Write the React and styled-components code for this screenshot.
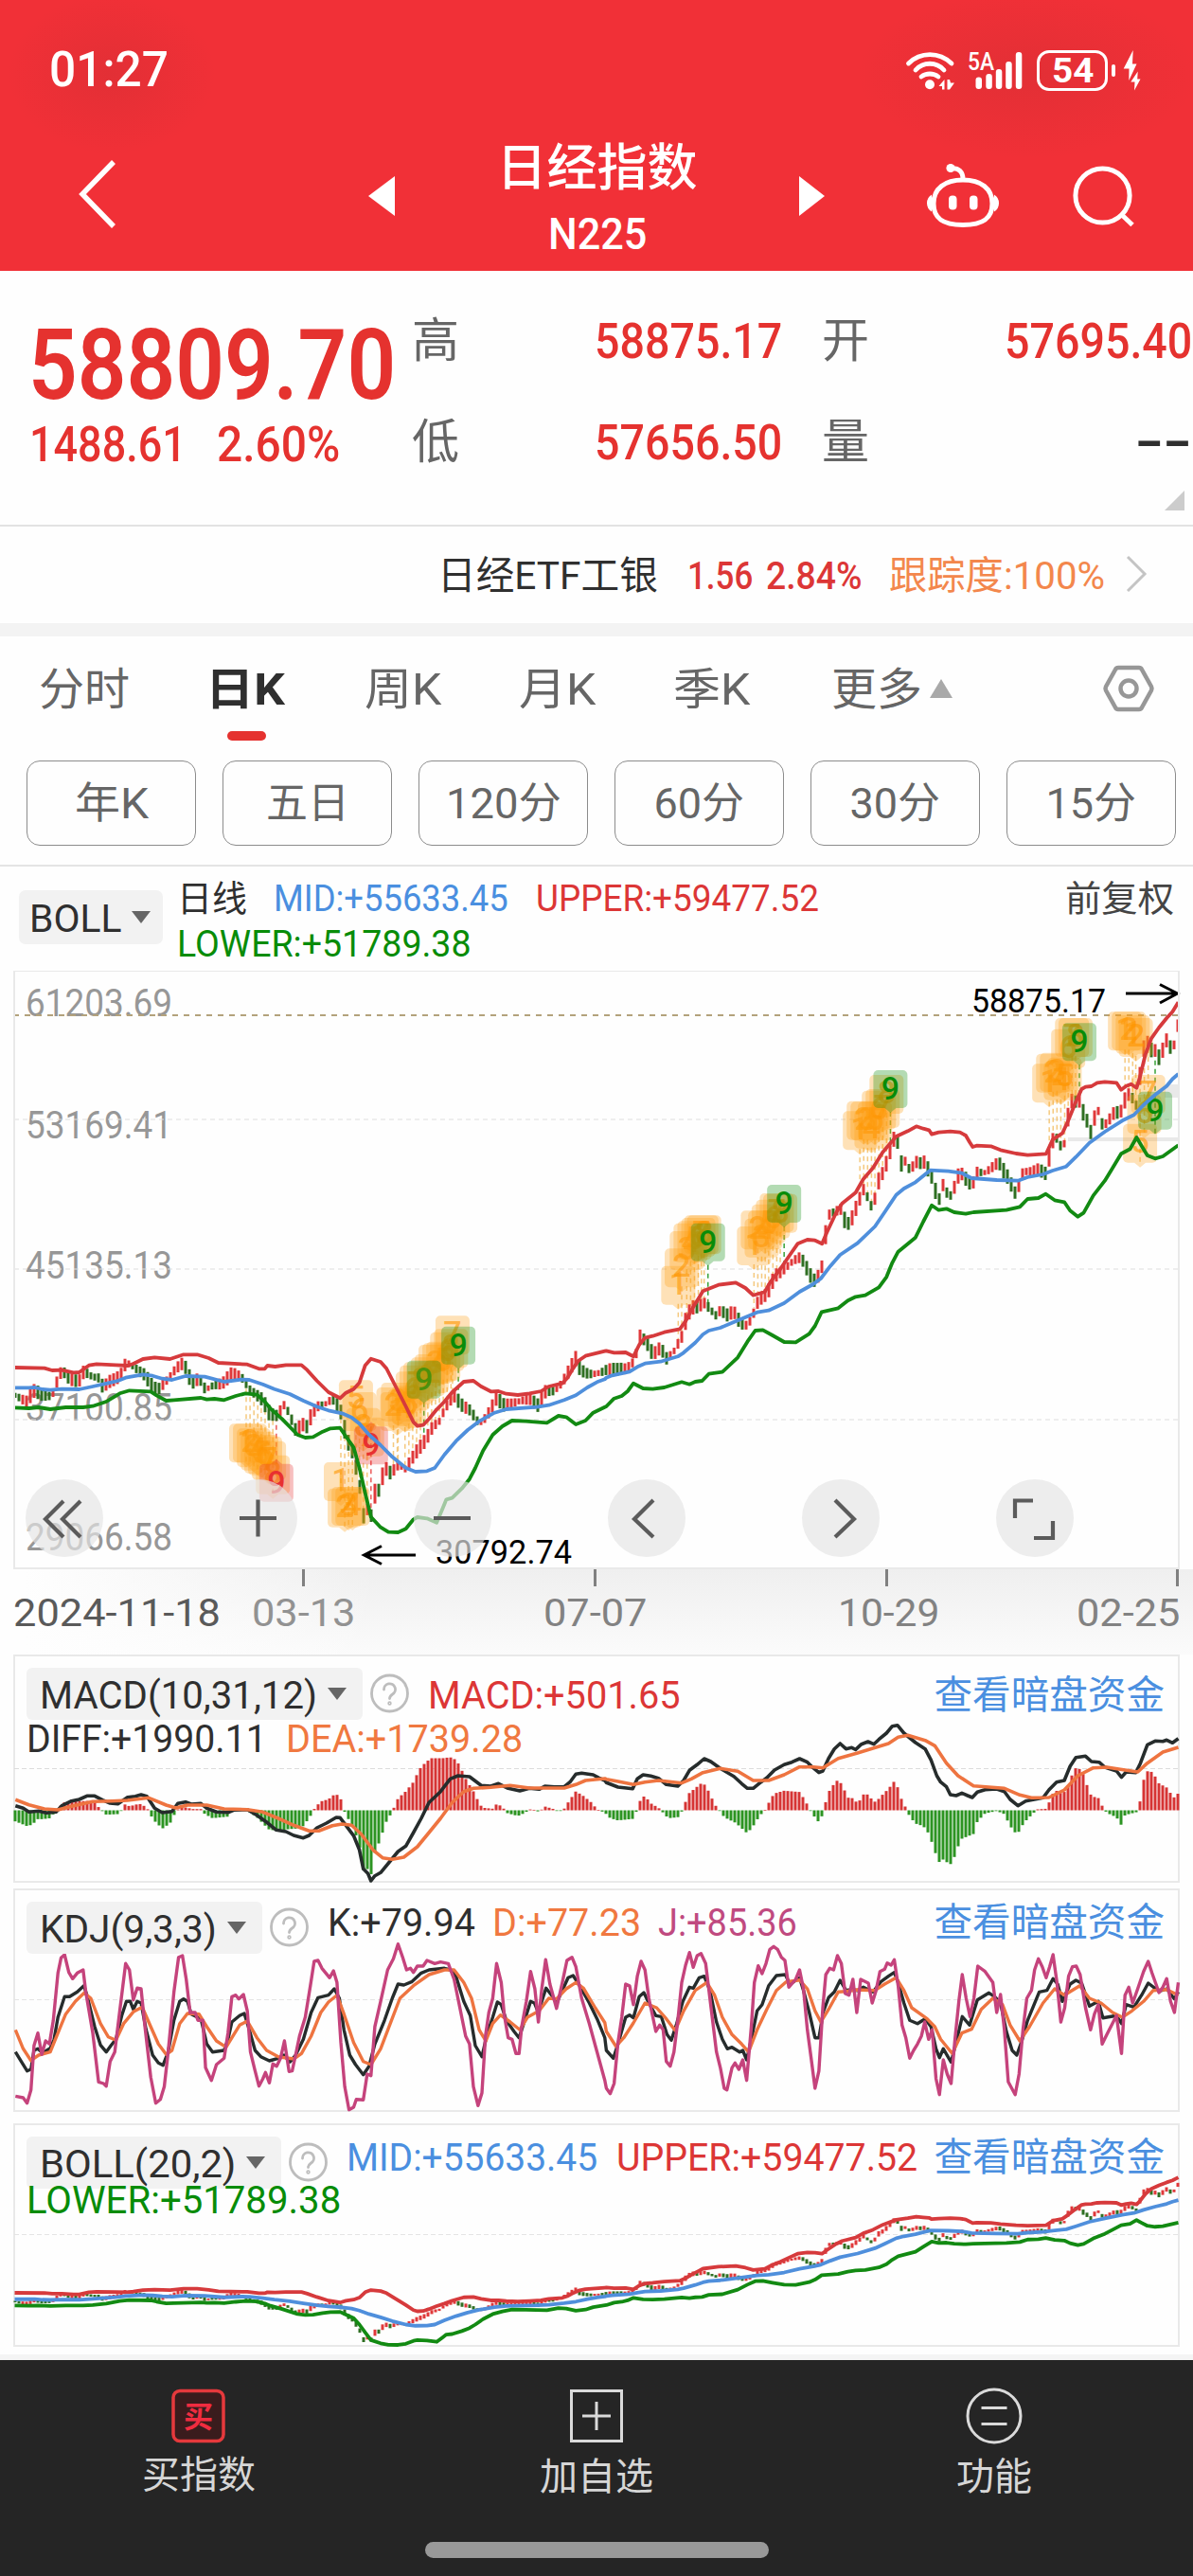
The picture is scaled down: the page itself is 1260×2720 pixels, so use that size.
import { useLayoutEffect, useRef, useState } from 'react';
import styled, { createGlobalStyle } from 'styled-components';

const RED = '#e5322f';
const BLUE = '#4a8fe0';
const GREEN = '#088c08';
const ORANGE = '#f07840';
const INK = '#2f2f2f';

/* ---------- chart data ---------- */

// Series are digitised per half of the time axis: "x,y x,y ..." in data units.
const SX = 2.45;
const SY = 3;

const parse = (str, ox, oy) =>
  str
    .trim()
    .split(/\s+/)
    .map((pair) => {
      const [x, y] = pair.split(',').map(Number);
      return [ox + x / SX, oy + y / SY];
    });

const series = (left, right, oyLeft, oyRight) => {
  const a = parse(left, 0, oyLeft).filter((p) => p[0] <= 639);
  const b = parse(right, 620, oyRight).filter((p) => p[0] > 639);
  return [...a, ...b];
};

const valueAt = (pts, x) => {
  if (x <= pts[0][0]) return pts[0][1];
  for (let i = 1; i < pts.length; i++) {
    if (x <= pts[i][0]) {
      const [x0, y0] = pts[i - 1];
      const [x1, y1] = pts[i];
      return y0 + ((y1 - y0) * (x - x0)) / (x1 - x0 || 1);
    }
  }
  return pts[pts.length - 1][1];
};

const toPoints = (pts) => pts.map((p) => `${p[0].toFixed(1)},${p[1].toFixed(1)}`).join(' ');

const upper = series(
  `38,222 115,224 135,231 160,230 190,238 205,237 230,215 250,211 300,214 330,216 345,210 370,195 400,190 440,195
   475,181 510,181 540,192 565,207 640,212 670,226 685,226 692,216 712,219 740,214 780,214 795,230 820,264 850,300
   880,319 895,302 915,290 930,270 945,215 960,194 985,204 1000,225 1025,285 1050,345 1070,395 1080,407 1095,404
   1110,385 1130,355 1150,330 1170,300 1200,267 1225,264 1245,282 1270,298 1290,297 1310,305 1340,309 1370,304
   1400,297 1420,282 1455,272 1468,255 1480,230 1497,200 1515,185 1565,170`,
  `50,1279 70,1285 100,1284 120,1297 135,1260 150,1238 170,1232 200,1220 240,1210 255,1185 270,1150 290,1110
   300,1090 340,1070 385,1063 410,1080 430,1103 460,1092 475,1060 500,1020 525,975 545,940 570,927 590,929 608,940
   620,905 645,840 660,812 695,778 715,735 740,700 765,650 800,600 830,583 852,568 870,575 885,580 892,593 910,587
   940,584 965,587 980,597 990,618 998,633 1008,629 1045,631 1070,643 1110,654 1140,659 1188,655 1205,610 1230,590
   1245,550 1265,490 1280,450 1290,443 1305,441 1320,430 1340,427 1370,430 1382,452 1395,440 1408,434 1422,446
   1430,415 1445,340 1460,290 1480,255 1500,225 1515,205 1530,175`,
  1370,
  1000
);

const mid = series(
  `38,286 75,286 90,285 110,291 130,293 160,290 205,291 240,282 280,271 305,264 325,254 370,244 395,248 420,257
   445,261 480,249 530,251 580,267 625,260 645,261 680,275 710,290 750,306 785,327 820,346 850,358 885,367 910,380
   930,400 955,435 985,468 1015,505 1050,540 1075,552 1105,550 1125,540 1150,498 1180,455 1210,420 1240,392
   1280,365 1310,354 1390,347 1420,341 1460,325 1490,310 1520,285 1545,268 1565,259`,
  `50,1364 65,1357 110,1345 130,1330 150,1319 190,1313 235,1297 250,1285 280,1253 300,1227 315,1215 345,1206
   390,1183 440,1157 470,1151 510,1128 550,1092 585,1068 605,1050 630,1010 655,975 700,938 745,885 770,840 800,785
   820,765 850,745 888,707 935,710 970,716 995,732 1060,738 1115,740 1140,729 1180,720 1205,708 1240,695 1265,665
   1300,620 1340,585 1385,550 1415,532 1440,500 1470,468 1500,440 1515,418 1530,402`,
  1370,
  1000
);

const lower = series(
  `38,349 75,351 100,348 130,354 170,348 215,348 240,344 275,330 310,304 335,295 390,298 405,310 430,327 450,325
   520,318 535,323 555,321 580,325 610,312 635,304 665,308 685,330 700,352 730,385 770,435 790,444 810,442 835,425
   855,415 880,413 895,440 915,475 930,540 945,620 960,695 985,728 1005,743 1030,744 1050,733 1070,703 1080,696
   1105,700 1130,713 1145,670 1155,640 1170,635 1195,605 1215,575 1230,540 1250,485 1275,435 1300,408 1325,390
   1360,392 1415,397 1445,375 1465,379 1490,402 1515,390 1535,365 1565,347`,
  `50,1455 70,1430 90,1422 105,1407 120,1382 145,1398 170,1400 200,1395 245,1378 265,1385 280,1377 298,1374
   315,1352 350,1346 390,1300 415,1250 435,1215 455,1213 480,1230 510,1251 540,1252 575,1225 590,1200 607,1156
   650,1144 675,1120 695,1108 720,1103 755,1078 775,1045 790,1000 805,965 850,920 870,870 892,818 910,833 930,829
   950,840 980,845 1000,840 1085,833 1120,823 1140,798 1168,795 1187,782 1210,802 1235,808 1250,835 1270,854
   1285,842 1310,787 1340,740 1360,700 1382,655 1405,640 1422,603 1435,630 1450,660 1470,670 1490,663 1530,628`,
  1370,
  1000
);

const price = series(
  `40,310 70,318 85,280 110,310 135,325 150,260 160,240 180,262 205,255 215,220 235,240 255,255 265,290 285,275
   300,270 315,245 325,205 350,215 375,235 395,285 410,295 430,275 445,250 460,225 475,205 485,235 495,265 515,240
   530,285 550,280 575,285 600,248 625,250 640,275 665,300 680,320 695,370 715,385 735,350 750,385 765,425 780,390
   795,400 805,355 820,335 840,340 860,330 870,350 885,385 895,460 910,485 920,535 930,590 940,700 950,650 960,690
   970,600 980,610 990,560 1000,548 1010,570 1030,540 1048,550 1060,515 1080,470 1100,440 1120,400 1135,400
   1150,360 1165,335 1175,320 1190,345 1215,350 1225,365 1240,390 1260,365 1285,320 1300,355 1325,345 1355,320
   1375,310 1390,335 1410,290 1435,305 1455,280 1475,230 1490,190 1500,225 1520,230 1565,232`,
  `50,1340 75,1350 100,1345 115,1325 127,1280 137,1215 147,1235 157,1250 170,1283 190,1265 205,1315 225,1290
   235,1265 245,1240 255,1180 270,1135 290,1130 300,1108 315,1135 335,1170 345,1150 360,1180 372,1170 380,1165
   395,1200 410,1200 425,1170 440,1110 455,1100 470,1080 485,1040 500,1040 520,1020 535,1000 550,985 560,995
   575,1030 590,1048 607,1005 618,880 628,835 640,850 655,835 668,890 680,885 690,845 700,810 715,755 725,785
   735,812 745,780 755,720 765,710 778,670 790,620 800,600 812,715 822,680 832,715 845,690 855,670 865,680 875,665
   882,695 892,720 902,775 912,800 920,740 930,790 940,800 950,770 962,725 975,730 985,755 1000,740 1010,700
   1025,705 1045,690 1065,680 1078,720 1090,745 1098,770 1108,795 1118,760 1127,715 1150,705 1165,692 1178,700
   1188,710 1197,640 1206,600 1216,610 1226,645 1236,630 1245,530 1255,490 1265,500 1275,490 1285,535 1295,550
   1303,585 1313,520 1323,505 1333,560 1345,550 1365,525 1375,535 1382,530 1392,490 1402,475 1412,490 1422,510
   1432,370 1442,290 1450,285 1460,320 1470,315 1480,345 1490,315 1498,285 1510,330 1520,315 1530,240`,
  1370,
  1000
);

const hist = series(
  `40,-35 70,-50 85,-45 95,-28 110,-28 130,-25 145,0 165,25 190,28 230,30 245,25 255,10 265,-3 275,-14 305,-12
   315,0 325,22 335,12 350,18 365,20 375,12 385,0 395,-28 420,-58 430,-50 445,-35 455,0 475,10 500,4 520,4 530,-12
   550,-25 590,-20 600,0 635,4 645,-5 665,-22 695,-60 715,-65 745,-60 765,-58 785,-50 805,-15 815,8 830,28 850,35
   865,50 878,48 885,25 893,-10 910,-45 920,-75 930,-110 940,-190 950,-185 960,-205 970,-135 980,-105 990,-70
   1000,-35 1010,-15 1020,10 1030,38 1050,60 1070,90 1085,130 1100,150 1115,165 1145,165 1165,168 1180,160
   1190,140 1205,100 1220,70 1230,50 1240,20 1250,8 1275,5 1285,20 1300,12 1310,-8 1340,-18 1355,-10 1375,5
   1395,-5 1410,12 1430,5 1445,-3 1460,5 1470,25 1490,60 1510,45 1530,25 1545,3 1560,-5`,
  `50,-12 60,-25 80,-32 120,-27 130,3 140,40 150,45 165,22 185,8 195,-5 210,-25 235,-22 250,5 260,50 275,65 295,85
   307,80 320,45 335,10 345,-3 355,-22 385,-40 412,-70 425,-60 440,-30 455,-5 465,5 475,40 490,55 510,62 550,58
   565,30 575,5 585,-15 598,-35 610,-15 620,40 630,70 650,98 660,80 675,40 690,38 700,20 715,50 730,50 740,25
   750,30 765,50 780,68 795,92 805,70 815,30 825,8 835,-20 850,-42 870,-50 885,-75 900,-130 910,-165 920,-155
   940,-172 950,-150 960,-115 970,-90 1000,-75 1010,-35 1030,-10 1060,-2 1080,-12 1090,-38 1105,-70 1118,-68
   1130,-40 1150,-15 1165,3 1190,5 1197,30 1210,65 1225,55 1240,60 1250,100 1265,135 1280,128 1295,75 1305,45
   1325,38 1335,8 1345,-8 1370,-22 1383,-48 1392,-15 1425,-5 1432,35 1440,95 1452,128 1465,118 1480,85 1500,72
   1515,45 1525,35 1530,58`,
  0,
  0
);

const diff = series(
  `40,500 60,508 75,520 100,517 120,523 145,520 160,500 185,485 205,480 225,469 245,469 265,482 285,492 305,494
   330,473 350,470 365,465 380,470 400,508 420,522 445,518 460,493 480,488 495,495 520,493 535,508 560,520 590,521
   605,514 640,512 665,530 690,552 715,577 740,582 760,594 785,602 800,594 820,570 845,555 870,537 880,538 895,562
   915,595 930,640 940,700 952,715 960,738 970,722 985,712 1010,675 1030,645 1050,628 1070,585 1090,540 1110,490
   1140,455 1165,415 1185,405 1215,408 1245,436 1270,438 1290,430 1315,445 1345,453 1370,445 1395,448 1410,438
   1435,440 1460,440 1475,425 1490,400 1505,397 1535,402 1550,412 1565,420`,
  `50,427 80,441 118,446 130,415 145,402 165,406 185,413 205,433 235,438 250,420 265,388 285,370 303,351 320,360
   345,382 380,407 400,430 415,445 430,445 450,425 465,412 485,387 510,370 530,362 550,351 570,362 585,380 600,395
   610,390 625,350 640,320 655,303 670,320 685,316 695,322 710,305 727,297 742,305 755,290 775,270 790,248 803,245
   820,270 850,300 875,320 890,355 905,405 915,425 930,440 940,465 955,468 970,460 985,468 997,474 1010,457
   1030,449 1060,447 1080,455 1095,480 1115,500 1135,485 1180,475 1195,450 1215,425 1235,420 1250,375 1265,347
   1290,343 1305,360 1325,362 1340,378 1370,390 1383,410 1395,393 1420,395 1432,365 1450,307 1470,295 1490,296
   1500,292 1515,301 1530,287`,
  1740,
  1740
);

const dea = series(
  `40,481 75,497 115,510 150,513 190,500 240,487 290,485 330,483 385,475 430,498 455,507 485,498 535,498 580,510
   640,512 680,520 720,540 760,562 800,580 825,580 860,563 885,558 910,562 935,590 965,640 990,665 1015,670
   1045,663 1080,630 1110,585 1140,540 1170,490 1200,455 1225,445 1270,442 1320,436 1370,444 1460,444 1490,433
   1515,420 1565,414`,
  `50,416 80,423 120,433 150,425 185,420 245,428 270,415 300,395 345,382 390,391 430,420 470,420 510,402 550,377
   585,377 610,380 650,350 700,333 740,318 780,303 805,283 830,277 875,293 900,310 930,365 960,405 1000,437
   1080,445 1120,466 1150,475 1195,474 1235,450 1270,405 1310,380 1345,378 1380,385 1425,393 1450,365 1490,330
   1530,315`,
  1740,
  1740
);

const kdjJ = series(
  `40,1420 60,1425 70,1442 80,1400 88,1260 98,1220 108,1288 118,1245 128,1255 138,1180 150,1030 158,982 167,972
   178,1028 188,1048 200,1030 215,1020 222,1090 240,1220 255,1375 268,1380 275,1388 285,1310 297,1280 310,1150
   325,1000 335,1020 345,1115 355,1078 365,1080 375,1200 390,1360 403,1442 415,1430 425,1390 435,1280 450,1090
   462,980 472,975 482,1050 492,1155 505,1155 512,1180 525,1180 532,1330 547,1370 560,1320 580,1300 590,1220
   600,1105 610,1100 618,1112 630,1098 640,1150 648,1280 660,1340 670,1388 680,1365 687,1345 697,1378 706,1318
   716,1325 726,1300 736,1245 748,1342 756,1340 765,1290 775,1230 790,1170 803,1070 813,993 823,990 833,1015
   853,1045 863,1023 872,1060 882,1250 892,1390 903,1463 915,1455 922,1430 940,1432 950,1350 960,1355 970,1200
   985,1120 1003,1020 1018,985 1030,938 1042,980 1052,1020 1062,1015 1070,1028 1080,1008 1095,1008 1105,990
   1125,1000 1140,995 1160,1000 1175,1050 1190,1140 1205,1230 1215,1255 1225,1390 1237,1450 1247,1410 1256,1230
   1265,1155 1275,1110 1285,1000 1297,1060 1305,1165 1315,1235 1325,1240 1335,1285 1343,1285 1350,1200 1362,1120
   1373,1025 1384,1080 1393,1185 1402,1080 1412,988 1423,1065 1440,1142 1455,1060 1467,990 1480,980 1490,1010
   1505,1110 1525,1190 1545,1280 1565,1370`,
  `50,1395 60,1412 70,1380 80,1250 90,1170 100,1065 110,1070 120,1130 130,1040 140,993 150,1020 160,1110 178,1215
   188,1195 197,1210 205,1310 215,1325 225,1280 235,1180 245,1060 255,1005 265,965 275,1012 285,975 295,968
   307,1000 320,1130 335,1280 345,1330 355,1395 362,1400 375,1330 383,1315 393,1335 403,1305 413,1370 425,1200
   433,1060 443,1007 453,1032 463,1000 473,955 483,946 493,955 503,980 512,990 522,1075 540,1050 550,1020 560,1080
   570,1210 580,1300 590,1395 600,1340 610,1140 618,1035 628,1015 638,1020 648,975 658,1000 668,1095 678,1100
   688,1050 698,1155 708,1050 728,1062 738,1125 748,1085 758,1025 770,1018 777,998 787,1005 795,988 805,1070
   815,1195 825,1235 835,1300 845,1275 855,1255 865,1230 874,1185 884,1240 893,1210 903,1365 912,1415 922,1305
   932,1350 942,1380 952,1240 962,1120 971,1035 981,1110 991,1168 1001,1110 1011,1008 1030,1025 1050,1060
   1060,1155 1070,1098 1080,1210 1090,1375 1108,1415 1118,1350 1128,1210 1138,1110 1150,1085 1158,1020 1168,985
   1178,1010 1188,1045 1197,1010 1206,972 1216,1060 1226,1185 1236,1140 1246,1040 1256,1010 1266,1008 1276,1035
   1290,1140 1303,1210 1313,1160 1323,1130 1333,1255 1345,1225 1370,1165 1383,1285 1392,1100 1402,1075 1412,1125
   1425,1080 1440,1025 1452,993 1462,1030 1480,1092 1490,1075 1500,1048 1510,1120 1520,1155 1530,1060`,
  1740,
  1740
);

const kdjK = series(
  `40,1280 55,1310 70,1340 80,1335 88,1275 98,1270 110,1283 130,1268 140,1240 150,1170 167,1105 180,1105 200,1090
   217,1070 225,1100 245,1200 260,1258 275,1280 287,1260 300,1240 315,1165 327,1120 337,1120 345,1145 355,1120
   365,1125 378,1210 395,1290 410,1315 422,1322 435,1280 450,1180 465,1120 475,1112 485,1120 495,1160 520,1175
   535,1255 550,1280 580,1275 590,1240 600,1185 620,1165 632,1158 645,1210 660,1275 675,1295 697,1308 720,1300
   735,1290 750,1312 765,1290 785,1240 805,1155 823,1108 850,1100 865,1080 878,1110 890,1210 905,1290 920,1320
   940,1352 955,1325 970,1255 995,1180 1015,1110 1030,1065 1045,1068 1065,1058 1090,1030 1110,1020 1150,1015
   1165,1020 1180,1040 1200,1120 1217,1165 1230,1260 1247,1295 1260,1225 1275,1170 1287,1122 1297,1130 1310,1180
   1330,1215 1343,1235 1355,1190 1373,1120 1383,1125 1393,1155 1403,1115 1413,1078 1430,1105 1440,1125 1455,1085
   1470,1045 1483,1038 1500,1070 1525,1125 1545,1175 1565,1235`,
  `50,1275 68,1300 80,1255 100,1170 110,1163 120,1172 135,1105 147,1092 160,1125 178,1165 192,1168 207,1225
   218,1243 232,1190 248,1120 265,1075 275,1078 290,1045 303,1040 318,1085 335,1185 350,1240 363,1270 375,1265
   395,1280 403,1275 413,1305 425,1240 440,1150 453,1130 470,1070 490,1038 513,1035 525,1065 550,1045 560,1085
   575,1155 590,1235 600,1235 612,1150 625,1108 640,1090 655,1053 670,1085 685,1082 700,1085 715,1075 740,1090
   760,1058 780,1040 795,1028 805,1060 820,1125 835,1180 855,1190 875,1175 890,1200 903,1270 912,1298 922,1270
   942,1312 955,1250 971,1168 990,1195 1010,1115 1040,1093 1055,1105 1070,1125 1085,1215 1100,1275 1112,1290
   1125,1245 1140,1180 1170,1090 1190,1085 1206,1048 1218,1065 1230,1120 1250,1065 1265,1053 1280,1062 1300,1135
   1323,1120 1335,1172 1370,1165 1383,1190 1395,1130 1415,1138 1435,1100 1452,1062 1480,1088 1500,1080 1520,1112
   1530,1090`,
  1740,
  1740
);

const kdjD = series(
  `40,1210 60,1270 80,1307 100,1290 130,1280 150,1220 170,1160 195,1120 218,1093 235,1110 260,1190 280,1232
   300,1243 320,1190 345,1153 368,1138 390,1200 410,1255 430,1288 445,1275 465,1190 485,1158 515,1160 535,1200
   560,1245 585,1265 605,1225 620,1195 640,1182 665,1235 690,1275 720,1295 760,1302 780,1285 805,1230 830,1155
   850,1122 872,1100 890,1160 915,1250 940,1310 960,1320 985,1270 1010,1190 1035,1110 1070,1070 1110,1035
   1150,1020 1175,1020 1200,1060 1220,1110 1240,1210 1257,1245 1275,1190 1295,1163 1320,1185 1345,1210 1365,1170
   1395,1150 1420,1110 1440,1112 1465,1080 1490,1060 1510,1078 1540,1140 1565,1187`,
  `50,1215 75,1262 95,1235 120,1188 150,1125 180,1140 205,1175 228,1212 250,1150 280,1085 310,1060 330,1100
   350,1170 375,1225 400,1255 418,1280 440,1210 465,1145 490,1085 515,1058 550,1052 570,1080 590,1150 605,1185
   625,1145 650,1090 670,1088 700,1083 745,1085 770,1065 800,1045 820,1085 840,1140 880,1175 900,1200 915,1240
   945,1285 970,1220 995,1208 1020,1145 1050,1110 1075,1130 1095,1195 1120,1245 1145,1200 1180,1125 1210,1080
   1235,1100 1275,1070 1300,1110 1330,1125 1360,1155 1385,1170 1410,1150 1440,1120 1465,1085 1500,1082 1530,1100`,
  1740,
  1740
);

const STEP = 4;
const SLOTS = 308;

const candles = Array.from({ length: SLOTS }, (_, i) => {
  const x = 16 + i * STEP;
  const now = valueAt(price, x);
  const prev = valueAt(price, x - STEP);
  const wobble = Math.sin(i * 12.9898) * 4;
  const half = 2.6 + Math.abs(Math.sin(i * 78.233)) * 4;
  return {
    x,
    top: Math.min(now, (now * 2 + prev) / 3) - half + wobble,
    bottom: Math.max(now, (now * 2 + prev) / 3) + half + wobble,
    up: Math.abs(now - prev) < 1.2 ? Math.sin(i * 4.7) > 0 : now < prev,
  };
});

const bars = Array.from({ length: SLOTS }, (_, i) => {
  const x = 16 + i * STEP;
  return { x, v: valueAt(hist, x) };
});

// [x, top, digit]: flags tied by a dashed lead to their candle
const at = (ox, oy, digits, spots) => spots.map(([x, y], i) => [ox + x / SX, oy + y / SY, digits[i]]);
const COUNT = [1, 2, 3, 4, 5, 6, 7, 8];

const flags = [
  ...at(0, 1370, COUNT, [[637, 400], [647, 400], [657, 415], [667, 425], [676, 435], [686, 440], [696, 455], [706, 500]]),
  ...at(0, 1370, [1, 2, 3, 4, 5, 6, 8, 7], [[882, 522], [892, 605], [902, 600], [912, 600], [921, 262], [930, 300], [940, 350], [950, 380]]),
  ...at(0, 1370, COUNT, [[1028, 300], [1018, 285], [1030, 270], [1048, 290], [1058, 280], [1068, 235], [1078, 215], [1088, 205]]),
  ...at(0, 1370, [1, 2, 3, 4, 5, 6, 8, 7], [[1107, 190], [1117, 180], [1127, 150], [1137, 145], [1147, 140], [1157, 110], [1167, 100], [1171, 58]]),
  ...at(620, 1000, COUNT, [[236, 1010], [245, 955], [258, 900], [268, 875], [278, 868], [288, 858], [296, 850], [303, 850]]),
  ...at(620, 1000, COUNT, [[432, 885], [442, 835], [452, 860], [461, 835], [470, 815], [481, 800], [491, 780], [500, 782]]),
  ...at(620, 1000, COUNT, [[706, 520], [716, 488], [726, 490], [736, 515], [745, 490], [755, 455], [765, 450], [775, 405]]),
  ...at(620, 1000, COUNT, [[1196, 370], [1206, 338], [1216, 335], [1226, 362], [1236, 350], [1245, 260], [1255, 225], [1264, 225]]),
  ...at(620, 1000, [1, 2, 1, 2, 5, 6, 7], [[1392, 205], [1402, 205], [1412, 215], [1420, 225], [1431, 560], [1442, 468], [1452, 405]]),
];

const nines = [
  { x: 1097 / SX, y: 1370 + 200 / SY, tone: GREEN, dim: true },
  { x: 1186 / SX, y: 1370 + 92 / SY, tone: GREEN },
  { x: 715 / SX, y: 1370 + 527 / SY, tone: '#e83030', below: true },
  { x: 960 / SX, y: 1370 + 409 / SY, tone: '#e83030', below: true },
  { x: 620 + 313 / SX, y: 1000 + 875 / SY, tone: GREEN },
  { x: 620 + 510 / SX, y: 1000 + 753 / SY, tone: GREEN },
  { x: 620 + 785 / SX, y: 1000 + 390 / SY, tone: GREEN },
  { x: 620 + 1274 / SX, y: 1000 + 241 / SY, tone: GREEN },
  { x: 620 + 1470 / SX, y: 1000 + 458 / SY, tone: GREEN },
];

const priceLabels = [
  ['61203.69', 1073],
  ['53169.41', 1202],
  ['45135.13', 1350],
  ['37100.85', 1500],
  ['29066.58', 1637],
];

const tabs = [
  { label: '分时', ml: 41, w: 96 },
  { label: '日K', ml: 80, w: 84, active: true },
  { label: '周K', ml: 84, w: 82 },
  { label: '月K', ml: 81, w: 82 },
  { label: '季K', ml: 81, w: 82 },
  { label: '更多', ml: 85, w: 96 },
];

const periods = [
  ['年K', 78],
  ['五日', 88],
  ['120分', 122],
  ['60分', 96],
  ['30分', 96],
  ['15分', 96],
];

/* ---------- shared bits ---------- */

function Fit({ w, ml, size, weight, color, lh, children }) {
  const ref = useRef(null);
  const [scale, setScale] = useState(1);

  useLayoutEffect(() => {
    setScale(w / ref.current.offsetWidth);
  }, [w, children]);

  return (
    <Slot $w={w} $ml={ml} $size={size} $weight={weight} $color={color} $lh={lh}>
      <Squeeze ref={ref} style={{ transform: `scaleX(${scale})` }}>
        {children}
      </Squeeze>
    </Slot>
  );
}

function Flag({ x, y, digit }) {
  return (
    <g>
      <rect x={x - 18} y={y} width="36" height="41" rx="5" fill="#ff9f14" opacity="0.3" />
      <path d={`M${x - 6} ${y + 41}h12l-6 5z`} fill="#ff9f14" opacity="0.3" />
      <FlagText x={x} y={y + 30} fill="#ff9500" opacity="0.6">
        {digit}
      </FlagText>
    </g>
  );
}

function Bands() {
  return (
    <g fill="none" strokeWidth="3.8" strokeLinejoin="round">
      <polyline points={toPoints(upper)} stroke="#d63a3c" vectorEffect="non-scaling-stroke" />
      <polyline points={toPoints(mid)} stroke="#4f8fdc" vectorEffect="non-scaling-stroke" />
      <polyline points={toPoints(lower)} stroke="#128a12" vectorEffect="non-scaling-stroke" />
    </g>
  );
}

function Candles() {
  return candles.map((c) => (
    <rect
      key={c.x}
      x={c.x - 1.5}
      y={c.top}
      width="3"
      height={c.bottom - c.top}
      fill={c.up ? '#e0383a' : '#2f6f22'}
    />
  ));
}

function MainChart() {
  return (
    <Drawing viewBox="0 1025 1260 632" $h={632}>
      <g fontSize="41" fill="#979797">
        {priceLabels.map(([text, y]) => (
          <text key={text} x="27" y={y} textLength="155" lengthAdjust="spacingAndGlyphs">
            {text}
          </text>
        ))}
      </g>
      <path d="M15 1182H1244M15 1340H1244M15 1499H1244" stroke="#dedede" strokeDasharray="5 4" />
      <path d="M14 1072H1244" stroke="#b3a27c" strokeWidth="2" strokeDasharray="6 6" />
      <rect x="1128" y="1201" width="116" height="4" fill="#e9e9e9" />
      <rect x="1230" y="1145" width="15" height="14" fill="#e9e9e9" />

      <g stroke="#f3bd60" strokeDasharray="5 4" opacity="0.8">
        {flags.map(([x, y]) => (
          <path key={`${x}-${y}`} d={`M${x} ${y + 40}V${valueAt(price, x)}`} strokeWidth="1.5" />
        ))}
      </g>
      {nines.map((n) => (
        <path
          key={n.x}
          d={`M${n.x} ${n.below ? n.y : n.y + 44}V${valueAt(price, n.x)}`}
          stroke={n.tone}
          strokeWidth="1.5"
          strokeDasharray="5 4"
          opacity="0.8"
        />
      ))}
      <Candles />
      {flags.map(([x, y, digit]) => (
        <Flag key={`${x}-${y}`} x={x} y={y} digit={digit} />
      ))}
      {nines.map((n) => (
        <g key={n.x}>
          <rect x={n.x - 18} y={n.y} width="36" height="40" rx="5" fill={n.tone} opacity="0.3" />
          <path
            d={n.below ? `M${n.x - 6} ${n.y}h12l-6 -5z` : `M${n.x - 6} ${n.y + 40}h12l-6 5z`}
            fill={n.tone}
            opacity="0.3"
          />
          <FlagText x={n.x} y={n.y + 31} fill={n.tone} opacity={n.dim ? 0.6 : 1}>
            9
          </FlagText>
        </g>
      ))}
      <Bands />

      <g fontSize="35.5" fill="#000">
        <text x="1026" y="1069" textLength="142" lengthAdjust="spacingAndGlyphs">
          58875.17
        </text>
        <text x="460" y="1651" textLength="144" lengthAdjust="spacingAndGlyphs">
          30792.74
        </text>
      </g>
      <g fill="none" stroke="#000" strokeWidth="3">
        <path d="M1189 1049H1243M1225 1039.5L1243.5 1049L1225 1059" />
        <path d="M439 1642H385M403 1632.5L384.5 1642L403 1651.5" />
      </g>
      <rect x="15" y="1025" width="1230" height="631" fill="none" stroke="#e9e9e9" strokeWidth="2" />
    </Drawing>
  );
}

function MacdChart() {
  return (
    <Drawing viewBox="0 1747 1260 247" $h={247}>
      <rect x="15" y="1748" width="1230" height="239" fill="none" stroke="#e9e9e9" strokeWidth="2" />
      <path d="M15 1867.5H1244" stroke="#dcdcdc" strokeDasharray="5 3" />
      {bars.map((b) => (
        <rect
          key={b.x}
          x={b.x - 1.5}
          y={b.v > 0 ? 1911.5 - b.v : 1911.5}
          width="3"
          height={Math.max(Math.abs(b.v), 0.7)}
          fill={b.v > 0 ? '#d63434' : '#2c9422'}
        />
      ))}
      <g fill="none" strokeWidth="3.6" strokeLinejoin="round">
        <polyline points={toPoints(diff)} stroke="#262c2c" />
        <polyline points={toPoints(dea)} stroke="#ee7440" />
      </g>
    </Drawing>
  );
}

function KdjChart() {
  return (
    <Drawing viewBox="0 1994 1260 248" $h={248}>
      <rect x="15" y="1995" width="1230" height="234" fill="none" stroke="#e9e9e9" strokeWidth="2" />
      <path d="M15 2111.5H1244" stroke="#e4e4e4" strokeDasharray="5 3" />
      <g fill="none" strokeWidth="3.4" strokeLinejoin="round">
        <polyline points={toPoints(kdjK)} stroke="#262c2c" />
        <polyline points={toPoints(kdjD)} stroke="#ee7440" />
        <polyline points={toPoints(kdjJ)} stroke="#c5437c" />
      </g>
    </Drawing>
  );
}

function BollChart() {
  return (
    <Drawing viewBox="0 2242 1260 250" $h={250}>
      <rect x="15" y="2243" width="1230" height="234" fill="none" stroke="#e9e9e9" strokeWidth="2" />
      <path d="M15 2359.5H1244" stroke="#e4e4e4" strokeDasharray="5 3" />
      <g transform="translate(0 1964.7) scale(1 0.316)">
        <Candles />
        <Bands />
      </g>
      <rect x="0" y="2486" width="1260" height="6" fill="#f4f4f4" />
    </Drawing>
  );
}

function Help() {
  return (
    <svg width="42" height="42" viewBox="0 0 42 42" fill="none" stroke="#bdbdbd" strokeWidth="2.8">
      <circle cx="21.5" cy="21" r="19" />
      <path d="M15.5 17a6 6 0 1 1 9 5c-2.200 1.500-3 2.400-3 4.600" strokeLinecap="round" />
      <circle cx="21.5" cy="31.5" r="0.8" />
    </svg>
  );
}

function Selector({ w, textWidth, children }) {
  return (
    <SelectBox $w={w}>
      <Fit w={textWidth} size={41} lh={57}>
        {children}
      </Fit>
      <Caret />
    </SelectBox>
  );
}

function ChartTool({ d }) {
  return (
    <ToolButton>
      <svg width="82" height="82" viewBox="0 0 82 82" fill="none" stroke="#5b5b5b" strokeWidth="4.2">
        <path d={d} />
      </svg>
    </ToolButton>
  );
}

/* ---------- page ---------- */

export default function App() {
  return (
    <>
      <GlobalStyle />
      <Screen>
        <Header>
          <StatusBar>
            <Fit w={126} size={52} lh={143} weight={500}>
              01:27
            </Fit>
            <StatusIcons>
              <svg
                width="58"
                height="48"
                viewBox="0 0 58 48"
                fill="none"
                stroke="#fff"
                strokeWidth="4.8"
                strokeLinecap="round"
              >
                <path d="M4.500 16C17 3.500 37 3.500 50 16" />
                <path d="M12 23C20 14 34 14 42 23" />
                <path d="M18 30C23 26 31 26 36 30" />
                <circle cx="27" cy="38.3" r="5" fill="#fff" stroke="none" />
                <path d="M42.500 33v10.500H40V40h-3.500zM45.500 33v10.500H48l5-7h-4l-1-3.500z" fill="#fff" stroke="none" />
              </svg>
              <Signal width="68" height="48" viewBox="0 0 68 48" fill="#fff">
                <text x="2" y="22.5" fontSize="26" fontWeight="500" textLength="28" lengthAdjust="spacingAndGlyphs">
                  5A
                </text>
                <rect x="10.5" y="30.5" width="6.5" height="12.5" rx="3" />
                <rect x="21.3" y="27" width="6.5" height="16" rx="3" />
                <rect x="31.8" y="22" width="6.5" height="21" rx="3" />
                <rect x="42.2" y="14" width="6.5" height="29" rx="3" />
                <rect x="52.8" y="4" width="6.5" height="39" rx="3" />
              </Signal>
              <Battery>
                <Fit w={44} size={36} lh={35} weight={700}>
                  54
                </Fit>
              </Battery>
              <Nub />
              <svg width="24" height="46" viewBox="0 0 24 46" fill="#fff">
                <path d="M12.700 1L2.700 20.500H8.500L8.300 33L16.500 15.500H12z" />
                <path d="M17.700 23.500L10.300 34.500H14.500L14 43.500L20.500 31.500H17.200z" />
              </svg>
            </StatusIcons>
          </StatusBar>
          <Nav>
            <NavIcon $ml={78} width="50" height="76" viewBox="0 0 50 76" fill="none" stroke="#fff" strokeWidth="5.5">
              <path d="M42 2L9 36L42 70" />
            </NavIcon>
            <NavIcon $ml={261} width="28" height="42" viewBox="0 0 28 42" fill="#fff">
              <path d="M28 0v42L0 21z" />
            </NavIcon>
            <Titles>
              <Fit w={212} size={53} lh={62} weight={500}>
                日经指数
              </Fit>
              <Fit w={104} size={47} lh={75} weight={500}>
                N225
              </Fit>
            </Titles>
            <NavIcon width="28" height="42" viewBox="0 0 28 42" fill="#fff">
              <path d="M0 0v42L27 21z" />
            </NavIcon>
            <NavIcon $ml={103} width="84" height="72" viewBox="0 0 84 72" fill="none" stroke="#fff" strokeWidth="5">
              <path d="M30 7c7-1 12 3 12 11" />
              <circle cx="29" cy="6.5" r="4.6" fill="#fff" stroke="none" />
              <path d="M42 19c19 0 31 9 31 25 0 15-9 22.500-31 22.500S11 59 11 44c0-16 12-25 31-25z" />
              <path d="M9 34.500q-5 3-5 9t5 9zM75 34.500q5 3 5 9t-5 9z" fill="#fff" stroke="none" />
              <rect x="27" y="35.5" width="8.5" height="15" rx="4" fill="#fff" stroke="none" />
              <rect x="49" y="35.5" width="8.5" height="15" rx="4" fill="#fff" stroke="none" />
            </NavIcon>
            <NavIcon $ml={71} width="72" height="72" viewBox="0 0 72 72" fill="none" stroke="#fff" strokeWidth="5">
              <circle cx="34.5" cy="35.5" r="28.6" />
              <path d="M55 56l11 10.500" />
            </NavIcon>
          </Nav>
        </Header>

        <Quote>
          <PriceColumn>
            <Fit w={388} size={103} lh={120} weight={600}>
              58809.70
            </Fit>
            <Row>
              <Fit w={166} ml={1} size={52} lh={48} weight={500}>
                1488.61
              </Fit>
              <Fit w={130} ml={32} size={52} lh={48} weight={500}>
                2.60%
              </Fit>
            </Row>
          </PriceColumn>
          <StatsColumn>
            <Stats>
              <StatLabel>高</StatLabel>
              <Fit w={198} size={52} lh={106} weight={500}>
                58875.17
              </Fit>
              <StatLabel>开</StatLabel>
              <Fit w={198} size={52} lh={106} weight={500}>
                57695.40
              </Fit>
              <StatLabel>低</StatLabel>
              <Fit w={198} size={52} lh={106} weight={500}>
                57656.50
              </Fit>
              <StatLabel>量</StatLabel>
              <Fit w={60} ml={138} size={60} lh={101} weight={500} color={INK}>
                --
              </Fit>
            </Stats>
            <Corner />
          </StatsColumn>
        </Quote>

        <EtfRow>
          <Fit w={233} size={41} lh={101} color={INK}>
            日经ETF工银
          </Fit>
          <Fit w={69} ml={31} size={41} lh={101} weight={500}>
            1.56
          </Fit>
          <Fit w={102} ml={14} size={41} lh={101} weight={500}>
            2.84%
          </Fit>
          <Fit w={228} ml={28} size={41} lh={101} color="#f3874c">
            跟踪度:100%
          </Fit>
          <Chevron width="24" height="40" viewBox="0 0 24 40" fill="none" stroke="#c4c4c4" strokeWidth="3">
            <path d="M2 2l18 18L2 38" />
          </Chevron>
        </EtfRow>

        <Tabs>
          {tabs.map((t) => (
            <Tab key={t.label} $ml={t.ml} $active={t.active}>
              <Fit w={t.w} size={47} lh={108} weight={t.active ? 700 : 400} color={t.active ? INK : '#666'}>
                {t.label}
              </Fit>
            </Tab>
          ))}
          <MoreMark width="24" height="20" viewBox="0 0 24 20" fill="#a9a9a9">
            <path d="M12 0L24 20H0z" />
          </MoreMark>
          <Gear width="56" height="52" viewBox="0 0 56 52" fill="none" stroke="#979797" strokeWidth="4.5">
            <path d="M17 4h22q2 0 3 2l10 18q1 2 0 4L42 46q-1 2-3 2H17q-2 0-3-2L4 28q-1-2 0-4L14 6q1-2 3-2z" />
            <circle cx="28" cy="26" r="8.5" />
          </Gear>
        </Tabs>

        <Periods>
          {periods.map(([label, w]) => (
            <Period key={label}>
              <Fit w={w} size={45} lh={86}>
                {label}
              </Fit>
            </Period>
          ))}
        </Periods>

        <ChartHead>
          <BollBox>
            <Fit w={98} size={40} lh={59}>
              BOLL
            </Fit>
            <Caret />
          </BollBox>
          <HeadLegend>
            <Row>
              <Fit w={74} size={38} lh={37} color={INK}>
                日线
              </Fit>
              <Fit w={248} ml={28} size={38} lh={37} color={BLUE}>
                MID:+55633.45
              </Fit>
              <Fit w={299} ml={29} size={38} lh={37}>
                UPPER:+59477.52
              </Fit>
            </Row>
            <Fit w={311} size={38.5} lh={57} color={GREEN}>
              LOWER:+51789.38
            </Fit>
          </HeadLegend>
          <Adjust>
            <Fit w={115} size={38} lh={37} color="#444">
              前复权
            </Fit>
          </Adjust>
        </ChartHead>

        <ChartArea>
          <MainChart />
          <Tools>
            <ChartTool d="M40 23L21 42L40 61M58 23L39 42L58 61" />
            <ChartTool d="M21 41H60M40.5 21.5V60.5" />
            <ChartTool d="M21 41H60" />
            <ChartTool d="M48 22L28 42L48 61" />
            <ChartTool d="M35 22L55 42L35 61" />
            <ChartTool d="M39 22.5H20V41M60 44V62H40" />
          </Tools>
        </ChartArea>
        <Axis>
          <Drawing viewBox="0 0 1260 18" $h={18}>
            <path d="M320.5 0V18M628.5 0V18M936.5 0V18M1243.5 0V18" stroke="#808080" strokeWidth="3" />
          </Drawing>
          <Dates>
            <Fit w={219} size={41} lh={53} color="#5a5a5a">
              2024-11-18
            </Fit>
            <Fit w={110} ml={33} size={41} lh={53} color="#929292">
              03-13
            </Fit>
            <Fit w={110} ml={198} size={41} lh={53} color="#828282">
              07-07
            </Fit>
            <Fit w={108} ml={201} size={41} lh={53} color="#828282">
              10-29
            </Fit>
            <Fit w={110} ml={144} size={41} lh={53} color="#828282">
              02-25
            </Fit>
          </Dates>
        </Axis>

        <Panel>
          <MacdChart />
          <PanelHead>
            <Row>
              <Selector w={355} textWidth={293}>
                MACD(10,31,12)
              </Selector>
              <HelpSlot>
                <Help />
              </HelpSlot>
              <Legend>
                <Fit w={267} ml={20} size={41} lh={54}>
                  MACD:+501.65
                </Fit>
              </Legend>
              <FundLink>查看暗盘资金</FundLink>
            </Row>
            <Row>
              <Fit w={254} size={41} lh={33} color={INK}>
                DIFF:+1990.11
              </Fit>
              <Fit w={250} ml={20} size={41} lh={33} color={ORANGE}>
                DEA:+1739.28
              </Fit>
            </Row>
          </PanelHead>
        </Panel>

        <Panel>
          <KdjChart />
          <PanelHead>
            <Row>
              <Selector w={249} textWidth={187}>
                KDJ(9,3,3)
              </Selector>
              <HelpSlot>
                <Help />
              </HelpSlot>
              <Legend $lift={7}>
                <Fit w={156} ml={20} size={41} lh={54} color={INK}>
                  K:+79.94
                </Fit>
                <Fit w={157} ml={18} size={41} lh={54} color={ORANGE}>
                  D:+77.23
                </Fit>
                <Fit w={147} ml={18} size={41} lh={54} color="#c04a80">
                  J:+85.36
                </Fit>
              </Legend>
              <FundLink $lift={7}>查看暗盘资金</FundLink>
            </Row>
          </PanelHead>
        </Panel>

        <Panel>
          <BollChart />
          <PanelHead>
            <Row>
              <Selector w={269} textWidth={207}>
                BOLL(20,2)
              </Selector>
              <HelpSlot>
                <Help />
              </HelpSlot>
              <Legend $lift={7}>
                <Fit w={265} ml={20} size={41} lh={54} color={BLUE}>
                  MID:+55633.45
                </Fit>
                <Fit w={318} ml={20} size={41} lh={54}>
                  UPPER:+59477.52
                </Fit>
              </Legend>
              <FundLink $lift={7}>查看暗盘资金</FundLink>
            </Row>
            <Row $lift={7}>
              <Fit w={332} size={41} lh={35} color={GREEN}>
                LOWER:+51789.38
              </Fit>
            </Row>
          </PanelHead>
        </Panel>

        <BottomNav>
          <NavItems>
            <NavItem>
              <svg width="60" height="60" viewBox="0 0 60 60">
                <rect x="3" y="3.5" width="53" height="53" rx="7" fill="#3a1c1d" stroke="#e5393c" strokeWidth="3.5" />
                <text x="29.5" y="41.5" fontSize="31" fontWeight="700" fill="#f02c40" textAnchor="middle">
                  买
                </text>
              </svg>
              <NavLabel $lh={66}>买指数</NavLabel>
            </NavItem>
            <NavItem>
              <svg width="60" height="60" viewBox="0 0 60 60" fill="none" stroke="#dadada" strokeWidth="3">
                <path d="M3.5 3.5h53v53h-53zM30 15v30M15 30h30" />
              </svg>
              <NavLabel $lh={70}>加自选</NavLabel>
            </NavItem>
            <NavItem>
              <svg width="60" height="60" viewBox="0 0 60 60" fill="none" stroke="#dadada" strokeWidth="3">
                <circle cx="30" cy="30" r="28" />
                <path d="M16.5 21.5h27M16.5 38.5h27" />
              </svg>
              <NavLabel $lh={70}>功能</NavLabel>
            </NavItem>
          </NavItems>
          <HomeBar />
        </BottomNav>
      </Screen>
    </>
  );
}

const GlobalStyle = createGlobalStyle`
  * {
    box-sizing: border-box;
  }

  body {
    margin: 0;
    background: #fff;
    font-family: Roboto, 'Noto Sans CJK SC', sans-serif;
  }

  svg {
    display: block;
    flex-shrink: 0;
    font-family: Roboto, 'Noto Sans CJK SC', sans-serif;
  }
`;

const Screen = styled.div`
  width: 1260px;
  height: 2720px;
  overflow: hidden;
  background: #fefefe;
`;

const Slot = styled.div`
  flex-shrink: 0;
  width: ${({ $w }) => $w}px;
  margin-left: ${({ $ml }) => $ml || 0}px;
  padding-top: 2px;
  font-size: ${({ $size }) => $size}px;
  font-weight: ${({ $weight }) => $weight || 400};
  line-height: ${({ $lh }) => $lh}px;
  height: ${({ $lh }) => $lh}px;
  color: ${({ $color }) => $color || 'inherit'};
  white-space: nowrap;
`;

const Squeeze = styled.span`
  display: inline-block;
  transform-origin: left center;
`;

const Row = styled.div`
  display: flex;
  margin-top: ${({ $lift }) => -($lift || 0)}px;
`;

const Drawing = styled.svg`
  width: 1260px;
  height: ${({ $h }) => $h}px;
`;

const FlagText = styled.text`
  font-size: 34px;
  font-weight: 500;
  text-anchor: middle;
`;

const Header = styled.header`
  height: 286px;
  color: #fff;
  background:
    radial-gradient(ellipse 110px 85px at 118px 78px, rgba(120, 40, 40, 0.12), transparent),
    radial-gradient(ellipse 180px 90px at 1085px 78px, rgba(120, 40, 40, 0.12), transparent),
    #f13037;
`;

const StatusBar = styled.div`
  display: flex;
  justify-content: space-between;
  height: 145px;
  padding: 0 52px;
`;

const StatusIcons = styled.div`
  display: flex;
  align-items: center;
  padding-top: 4px;
`;

const Signal = styled.svg`
  margin-left: 7px;
`;

const Battery = styled.div`
  display: flex;
  justify-content: center;
  width: 75px;
  height: 43px;
  margin-left: 7px;
  border: 3px solid #fff;
  border-radius: 13px;
`;

const Nub = styled.div`
  width: 4px;
  height: 13px;
  margin: 0 6px 0 4px;
  border-radius: 2px;
  background: #fff;
`;

const Nav = styled.div`
  display: flex;
  align-items: center;
  height: 141px;
`;

const NavIcon = styled.svg`
  margin: 0 0 17px ${({ $ml }) => $ml || 0}px;
`;

const Titles = styled.div`
  display: flex;
  flex-direction: column;
  align-items: center;
  width: 427px;
  height: 141px;
`;

const Quote = styled.section`
  display: flex;
  height: 270px;
  color: ${RED};
  border-bottom: 2px solid #e2e2e2;
`;

const PriceColumn = styled.div`
  width: 434px;
  padding: 38px 0 0 30px;
`;

const StatsColumn = styled.div`
  display: flex;
  flex-direction: column;
  align-items: flex-end;
  flex: 1;
  padding-top: 20px;
`;

const Stats = styled.div`
  display: grid;
  grid-template-columns: 194px 239px 194px 199px;
  grid-auto-rows: 107px;
`;

const StatLabel = styled.span`
  padding-left: 1px;
  color: #666;
  font-size: 50px;
  line-height: 108px;
`;

const Corner = styled.div`
  width: 21px;
  height: 21px;
  margin: -2px 9px 0 0;
  background: #ccc;
  clip-path: polygon(100% 0, 100% 100%, 0 100%);
`;

const EtfRow = styled.section`
  display: flex;
  height: 116px;
  padding-left: 462px;
  color: #dc3636;
  border-bottom: 14px solid #f3f3f3;
`;

const Chevron = styled.svg`
  margin: 30px 0 0 22px;
`;

const Tabs = styled.nav`
  display: flex;
  height: 108px;
`;

const Tab = styled.div`
  position: relative;
  margin-left: ${({ $ml }) => $ml}px;

  &::after {
    content: '';
    display: ${({ $active }) => ($active ? 'block' : 'none')};
    position: absolute;
    bottom: -2px;
    left: 23px;
    width: 41px;
    height: 10px;
    border-radius: 5px;
    background: ${RED};
  }
`;

const MoreMark = styled.svg`
  margin: 45px 0 0 8px;
`;

const Gear = styled.svg`
  margin: 29px 0 0 158px;
`;

const Periods = styled.div`
  display: flex;
  gap: 28px;
  padding: 23px 18px 20px 28px;
  border-bottom: 2px solid #e4e4e4;
`;

const Period = styled.div`
  display: flex;
  justify-content: center;
  width: 179px;
  height: 90px;
  color: #666;
  border: 1.5px solid #8c8c8c;
  border-radius: 14px;
`;

const ChartHead = styled.div`
  display: flex;
  height: 110px;
  color: #dc3636;
`;

const BollBox = styled.div`
  display: flex;
  align-items: center;
  gap: 10px;
  width: 152px;
  height: 57px;
  margin: 25px 0 0 20px;
  padding-left: 11px;
  color: ${INK};
  background: #f2f2f2;
  border-radius: 7px;
`;

const HeadLegend = styled.div`
  margin: 14px 0 0 15px;
`;

const Adjust = styled.div`
  margin: 14px 20px 0 auto;
`;

const Caret = styled.i`
  border: 10px solid transparent;
  border-top: 13px solid #666;
  border-bottom: 0;
`;

const ChartArea = styled.div`
  position: relative;
  height: 632px;
`;

// Floating controls over the lower edge of the plot
const Tools = styled.div`
  position: absolute;
  left: 27px;
  bottom: 13px;
  display: flex;
  gap: 123px;
`;

const ToolButton = styled.div`
  width: 82px;
  height: 82px;
  border-radius: 50%;
  background: rgba(229, 229, 229, 0.68);
`;

const Axis = styled.div`
  height: 90px;
  background:
    linear-gradient(to right, #fefefe 2%, rgba(254, 254, 254, 0) 32%),
    linear-gradient(#efefef, #fbfbfb);
`;

const Dates = styled.div`
  display: flex;
  padding-left: 14px;
`;

const Panel = styled.section`
  display: grid;

  > * {
    grid-area: 1 / 1;
  }
`;

const PanelHead = styled.div`
  padding: 14px 30px 0 28px;
  color: #dc3636;
`;

const SelectBox = styled.div`
  display: flex;
  align-items: center;
  gap: 11px;
  width: ${({ $w }) => $w}px;
  height: 55px;
  padding-left: 14px;
  color: ${INK};
  background: #f2f2f2;
  border-radius: 6px;
`;

const HelpSlot = styled.div`
  margin: 6px 0 0 7px;
`;

const Legend = styled.div`
  display: flex;
  margin-top: ${({ $lift }) => -($lift || 0)}px;
`;

const FundLink = styled.span`
  margin: ${({ $lift }) => 2 - ($lift || 0)}px 0 0 auto;
  color: ${BLUE};
  font-size: 40.6px;
  line-height: 55px;
`;

const BottomNav = styled.footer`
  display: flex;
  flex-direction: column;
  align-items: center;
  height: 228px;
  padding-top: 29px;
  background: #252525;
`;

const NavItems = styled.div`
  display: flex;
  height: 163px;
`;

const NavItem = styled.div`
  display: flex;
  flex-direction: column;
  align-items: center;
  width: 420px;
`;

const NavLabel = styled.span`
  color: #d6d6d6;
  font-size: 40px;
  line-height: ${({ $lh }) => $lh}px;
`;

const HomeBar = styled.div`
  width: 363px;
  height: 17px;
  border-radius: 9px;
  background: #999;
`;
